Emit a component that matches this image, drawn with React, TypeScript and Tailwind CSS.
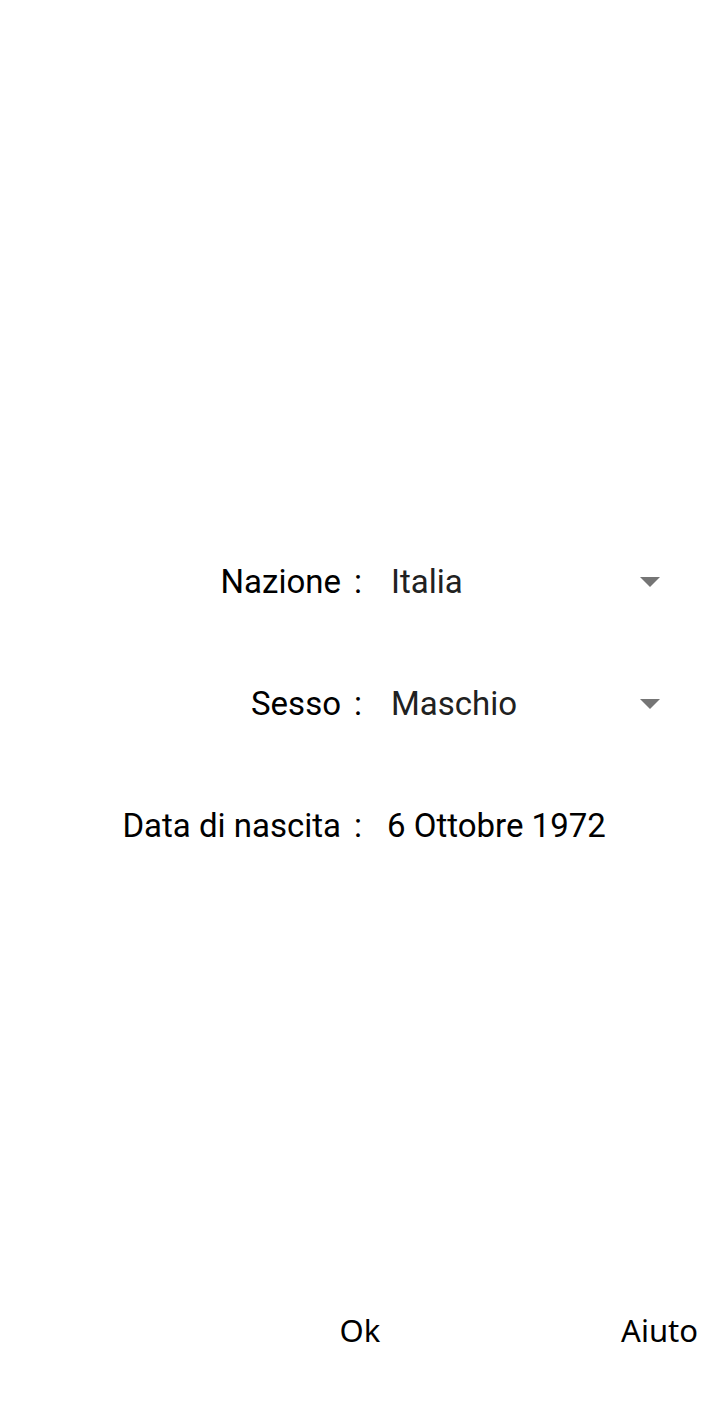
import React from 'react';

function Arrow() {
  return (
    <svg width="20" height="10" viewBox="0 0 20 10" className="shrink-0">
      <path d="M0 0 L20 0 L10 10 Z" fill="#757575" />
    </svg>
  );
}

interface RowProps {
  label: string;
  value: string;
  spinner?: boolean;
}

function Row({ label, value, spinner }: RowProps) {
  return (
    <div className="flex h-[122px] items-center">
      <div className="w-[341px] text-right text-black">{label}</div>
      <div className="w-[34px] text-center text-black">:</div>
      {spinner ? (
        <div className="flex w-[297px] items-center justify-between pl-[16px] pr-[12px]">
          <span className="text-[#212121]">{value}</span>
          <Arrow />
        </div>
      ) : (
        <div className="pl-[12px] text-black">{value}</div>
      )}
    </div>
  );
}

export default function App() {
  return (
    <div className="flex h-[1404px] w-[720px] flex-col bg-white text-[33px] font-['Roboto',sans-serif]">
      <div className="flex-1 pt-[521px]">
        <Row label="Nazione" value="Italia" spinner />
        <Row label="Sesso" value="Maschio" spinner />
        <Row label="Data di nascita" value="6 Ottobre 1972" />
      </div>
      <div className="mb-[26px] flex h-[96px] items-center text-[31px] font-['Noto_Sans',sans-serif] text-black">
        <div className="w-[240px]" />
        <button className="w-[240px] text-center">Ok</button>
        <div className="flex-1" />
        <button className="pr-[22px]">Aiuto</button>
      </div>
    </div>
  );
}
